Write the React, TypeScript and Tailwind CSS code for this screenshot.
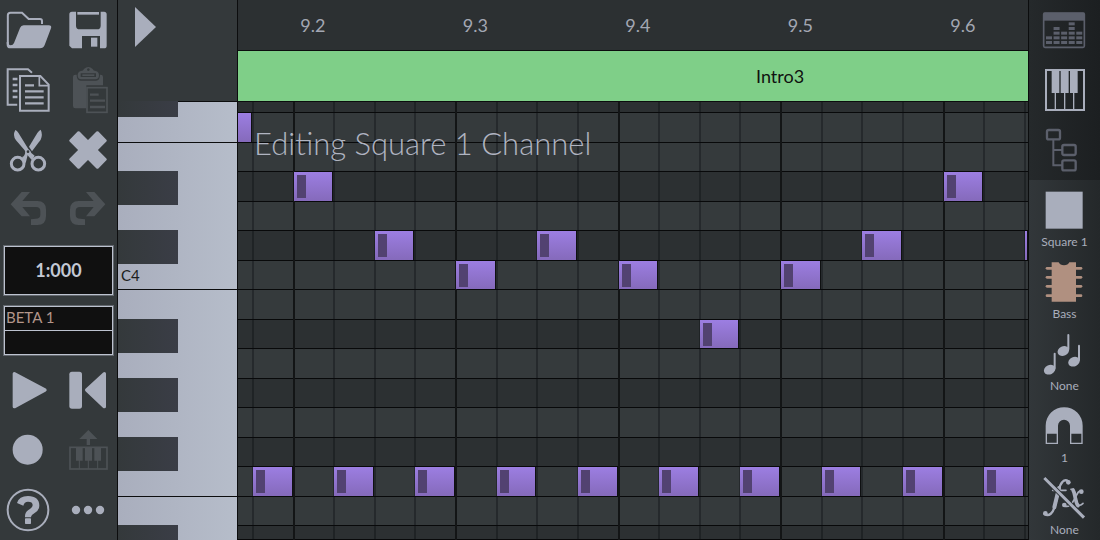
import type { ReactNode } from "react";

const LIGHT = "#a9aebc";
const DIM = "#4d5256";
const MUTED = "#5b5f6b";
const PANEL = "#34393b";

const COLS = "grid grid-cols-[minmax(0,140fr)_repeat(19,minmax(0,406fr))_minmax(0,42fr)]";
const ROWS =
  "grid grid-rows-[11px_30px_29px_30px_29px_30px_29px_30px_29px_30px_29px_30px_29px_30px_29px_1fr]";

/* ---------- toolbar icons (three units per pixel) ---------- */

function Icon({ color = LIGHT, children }: { color?: string; children: ReactNode }) {
  return (
    <svg viewBox="0 0 174 180" className="h-[60px] w-[58px]" fill={color} stroke="none" aria-hidden="true">
      {children}
    </svg>
  );
}

const FolderIcon = () => (
  <Icon>
    <path
      d="M23.500 132V46q0-8 8-8H66L86 57H120q6 0 6 6V72"
      fill="none"
      stroke={LIGHT}
      strokeWidth="6"
    />
    <path d="M71 76H146Q156 76 153 85L134 135Q130 145 120 145H31Q20 145 20 134V126H26V130Q26 136 32 136Q39 136 42 129L60 84Q63 76 71 76Z" />
  </Icon>
);

const SaveIcon = () => (
  <Icon>
    <path
      fillRule="evenodd"
      d="M42 35H138Q146 35 146 43V137Q146 145 138 145H126V108H72V145H42L34 137V43Q34 35 42 35ZM54 35V77Q54 88 65 88H117Q128 88 128 77V35Z"
    />
    <rect x="58" y="36" width="65" height="8" />
    <rect x="99" y="113" width="19" height="27" />
  </Icon>
);

const CopyIcon = () => (
  <Icon>
    <path d="M52 134H23V28H84L96 38" fill="none" stroke={LIGHT} strokeWidth="6" />
    <path d="M38 57H53M38 75H53M38 93H53M38 111H53" stroke={LIGHT} strokeWidth="8" />
    <path d="M60 48H121L146 74V152H60Z" fill={PANEL} stroke={PANEL} strokeWidth="14" />
    <path d="M60 48H121L146 74V152H60Z" fill="none" stroke={LIGHT} strokeWidth="6" />
    <path d="M118 48V77H146" fill="none" stroke={LIGHT} strokeWidth="5" />
    <path d="M75 76H102M75 94H131M75 112H131M75 130H131" stroke={LIGHT} strokeWidth="7" />
  </Icon>
);

const PasteIcon = () => (
  <Icon color={DIM}>
    <path d="M52 44H128Q135 44 135 51V76H85V145H52Q45 145 45 138V51Q45 44 52 44Z" />
    <path d="M66 28Q75 28 77 22Q91 14 105 22Q107 28 116 28Q126 32 126 45Q126 62 114 62H68Q56 62 56 45Q56 32 66 28Z" fill={PANEL} />
    <path
      fillRule="evenodd"
      d="M69 33Q76 33 78 27Q91 15 104 27Q106 33 113 33Q123 35 123 46Q123 58 112 58H70Q59 58 59 46Q59 35 69 33ZM91 25a4 4 0 1 0 .1 0ZM68 40V51H114V40Z"
    />
    <rect x="73" y="43" width="36" height="5" />
    <rect x="87" y="83" width="60" height="74" fill={PANEL} stroke={DIM} strokeWidth="5" />
    <path d="M96 104H122M96 122H141M96 141H141" stroke={DIM} strokeWidth="7" />
  </Icon>
);

const CutIcon = () => (
  <Icon>
    <path d="M46 30Q51 32 55 38L85 87Q93 93 94 99L104 107L96 121L84 107Q75 101 74 91L48 61Q37 46 46 30Z" />
    <path d="M122 29Q129 43 122 59L96 94L87 80L112 39Q117 31 122 29Z" />
    <path d="M76 95L84 101L77 130L66 111Q75 108 76 95Z" />
    <circle cx="84" cy="95" r="4" fill={PANEL} />
    <circle cx="53" cy="131" r="19" fill={PANEL} stroke={LIGHT} strokeWidth="9" />
    <circle cx="115" cy="131" r="19" fill={PANEL} stroke={LIGHT} strokeWidth="9" />
  </Icon>
);

const DeleteIcon = () => (
  <Icon>
    <g transform="rotate(45 90 90)">
      <rect x="29" y="69" width="122" height="42" rx="4" />
      <rect x="69" y="29" width="42" height="122" rx="4" />
    </g>
  </Icon>
);

const ARROW =
  "M32 73L65 36H90L67 63H112Q138 63 138 89V109Q138 135 112 135H93V118Q100 116 107 116Q121 116 121 104V93Q121 81 108 81H67L90 109H65Z";

const UndoIcon = () => (
  <Icon color={DIM}>
    <path d={ARROW} />
  </Icon>
);

const RedoIcon = () => (
  <Icon color={DIM}>
    <path d={ARROW} transform="translate(174 0) scale(-1 1)" />
  </Icon>
);

const PlayIcon = () => (
  <Icon>
    <path d="M43 41V140L135 90Z" stroke={LIGHT} strokeWidth="10" strokeLinejoin="round" />
  </Icon>
);

const RewindIcon = () => (
  <Icon>
    <rect x="34" y="35" width="38" height="111" rx="8" />
    <path d="M86 90L139 41V140Z" stroke={LIGHT} strokeWidth="10" strokeLinejoin="round" />
  </Icon>
);

const RecordIcon = () => (
  <Icon>
    <circle cx="83" cy="89" r="45" />
  </Icon>
);

const KeysUpIcon = () => (
  <Icon color={DIM}>
    <path d="M91 30L118 57H96V75H86V57H64Z" />
    <rect x="36" y="82" width="111" height="65" fill="none" stroke={DIM} strokeWidth="5" />
    <path d="M54 82H74V122H54ZM81 82H102V122H81ZM109 82H129V122H109Z" />
    <path d="M64 120V147M91 120V147M119 120V147" stroke={DIM} strokeWidth="3" />
  </Icon>
);

const HelpIcon = () => (
  <Icon>
    <circle cx="84" cy="90" r="61" fill="none" stroke={LIGHT} strokeWidth="6" />
    <path
      d="M51 69Q57 48 84 48Q118 49 118 77Q118 90 105 98Q93 105 93 112H75Q74 97 85 90Q98 83 98 75Q98 65 84 65Q73 65 70 77Z"
    />
    <rect x="75" y="115" width="18" height="17" rx="2" />
  </Icon>
);

const MoreIcon = () => (
  <Icon>
    <circle cx="54" cy="90" r="12.500" />
    <circle cx="90" cy="90" r="12.500" />
    <circle cx="126" cy="90" r="12.500" />
  </Icon>
);

/* ---------- sidebar icons ---------- */

function TabIcon({ children }: { children: ReactNode }) {
  return (
    <svg viewBox="3 0 213 180" className="h-[60px] w-[71px]" aria-hidden="true">
      {children}
    </svg>
  );
}

function ItemIcon({ children }: { children: ReactNode }) {
  return (
    <svg viewBox="3 0 213 162" className="h-[54px] w-[71px]" fill={LIGHT} aria-hidden="true">
      {children}
    </svg>
  );
}

const MixerIcon = () => (
  <TabIcon>
    <rect x="47" y="39" width="122" height="103" rx="4" fill="none" stroke={MUTED} strokeWidth="5" />
    <rect x="47" y="38" width="122" height="24" fill={MUTED} />
    {[2, 4, 3, 5, 3].map((count, col) =>
      Array.from({ length: count }, (_, i) => (
        <rect key={`${col}-${i}`} x={54 + col * 22.7} y={123 - i * 14} width="18" height="9" fill={MUTED} />
      )),
    )}
  </TabIcon>
);

const PianoIcon = () => (
  <TabIcon>
    <rect x="54" y="30" width="114" height="120" fill="none" stroke={LIGHT} strokeWidth="6" />
    <path d="M71 30H94V99H71ZM98 30H122V99H98ZM126 30H149V99H126Z" fill={LIGHT} />
    <path d="M82 98V150M110 98V150M137 98V150" stroke={LIGHT} strokeWidth="4" />
  </TabIcon>
);

const TreeIcon = () => (
  <TabIcon>
    <g fill="none" stroke={MUTED} strokeWidth="7">
      <rect x="57" y="30" width="39" height="28" rx="5" />
      <rect x="103" y="75" width="40" height="30" rx="5" />
      <rect x="103" y="121" width="40" height="30" rx="5" />
      <path d="M76 58V136H103M76 90H103" strokeWidth="6" />
    </g>
  </TabIcon>
);

const SquareIcon = () => (
  <ItemIcon>
    <rect x="53" y="35" width="111" height="111" />
  </ItemIcon>
);

const ChipIcon = () => (
  <ItemIcon>
    <g fill="#b09080">
      <path d="M71 31H92Q96 40 108 40Q120 40 124 31H144V149H71Z" />
      {[45, 72, 99, 127].map((y) => (
        <rect key={y} x="53" y={y} width="110" height="8" rx="4" />
      ))}
    </g>
  </ItemIcon>
);

const NotesIcon = () => (
  <ItemIcon>
    {[
      [106, 81],
      [138, 113],
      [65, 137],
    ].map(([x, y]) => (
      <g key={x}>
        <ellipse cx={x} cy={y} rx="18" ry="14" transform={`rotate(-25 ${x} ${y})`} />
        <rect x={x + 12} y={y - 51} width="6" height="49" rx="3" />
      </g>
    ))}
  </ItemIcon>
);

const MagnetIcon = () => (
  <ItemIcon>
    <path
      fillRule="evenodd"
      d="M53 144V89A55 55 0 0 1 164 89V144H126V89A18 18 0 0 0 90 89V144ZM57 113V140H86V113ZM130 113V140H160V113Z"
    />
  </ItemIcon>
);

const FxIcon = () => (
  <ItemIcon>
    <g fill="none" stroke={LIGHT} strokeLinecap="round">
      <path d="M121 40C108 30 97 45 93 66L80 116C75 134 64 147 50 139" strokeWidth="7" />
      <path d="M93 60L79 118" strokeWidth="12" />
      <path d="M74 67H114" strokeWidth="5" />
      <path d="M129 64C140 62 140 76 143 90C146 106 150 120 165 106" strokeWidth="5" />
      <path d="M135 66C140 74 140 84 143 94C145 104 147 110 150 113" strokeWidth="11" />
      <path d="M161 69C151 64 145 84 139 94C131 110 121 120 108 113" strokeWidth="5" />
    </g>
    <circle cx="121" cy="43" r="7" />
    <circle cx="52" cy="136" r="7" />
    <circle cx="160" cy="71" r="7" />
    <circle cx="109" cy="111" r="7" />
    <path d="M49 30L168 149" stroke="#2b3033" strokeWidth="14" />
    <path d="M49 30L168 149" stroke={LIGHT} strokeWidth="9" />
  </ItemIcon>
);

/* ---------- data ---------- */

const topTools: [string, () => ReactNode, boolean?][] = [
  ["Open", FolderIcon],
  ["Save", SaveIcon],
  ["Copy", CopyIcon],
  ["Paste", PasteIcon, true],
  ["Cut", CutIcon],
  ["Delete", DeleteIcon],
  ["Undo", UndoIcon, true],
  ["Redo", RedoIcon, true],
];

const bottomTools: [string, () => ReactNode, boolean?][] = [
  ["Play", PlayIcon],
  ["Rewind", RewindIcon],
  ["Record", RecordIcon],
  ["Step input", KeysUpIcon, true],
  ["Help", HelpIcon],
  ["More", MoreIcon],
];

const tabs: [string, () => ReactNode][] = [
  ["Mixer", MixerIcon],
  ["Piano roll", PianoIcon],
  ["Arrangement", TreeIcon],
];

const settings: [string, string, () => ReactNode][] = [
  ["Channel", "Square 1", SquareIcon],
  ["Instrument", "Bass", ChipIcon],
  ["Chord", "None", NotesIcon],
  ["Snap", "1", MagnetIcon],
  ["Effect", "None", FxIcon],
];

const pitches = ["F#4", "F4", "E4", "D#4", "D4", "C#4", "C4", "B3", "A#3", "A3", "G#3", "G3", "F#3", "F3", "E3", "D#3"];
const isSharp = (p: string) => p.includes("#");

const beats: [string, number][] = [
  ["9.2", 3],
  ["9.3", 7],
  ["9.4", 11],
  ["9.5", 15],
  ["9.6", 19],
];

const notes: [number, string][] = [
  [3, "D#4"],
  [5, "C#4"],
  [7, "C4"],
  [9, "C#4"],
  [11, "C4"],
  [13, "A#3"],
  [15, "C4"],
  [17, "C#4"],
  [19, "D#4"],
  [21, "C#4"],
  ...[2, 4, 6, 8, 10, 12, 14, 16, 18, 20].map((c): [number, string] => [c, "F3"]),
];

/* ---------- panels ---------- */

function Tools({ items }: { items: [string, () => ReactNode, boolean?][] }) {
  return (
    <div className="grid grid-cols-[58px_58px]">
      {items.map(([label, Glyph, disabled]) => (
        <button key={label} type="button" aria-label={label} disabled={disabled}>
          <Glyph />
        </button>
      ))}
    </div>
  );
}

function Toolbar() {
  return (
    <aside className="w-[118px] shrink-0 border-r border-[#0c0d0e] bg-[#34393b]">
      <Tools items={topTools} />
      <div className="flex h-[120px] flex-col gap-[11px] px-1 pt-[6px]">
        <button
          type="button"
          className="h-[49px] border border-[#bcc2cf] bg-[#101010] text-[18px] leading-[47px] font-bold text-[#c3c8d4] outline outline-[#a9aebc]/40"
        >
          1:000
        </button>
        <div className="border border-[#bcc2cf] bg-[#101010] outline outline-[#a9aebc]/40">
          <div className="h-[24px] border-b border-[#bcc2cf] pl-px text-[15px] leading-[21px] text-[#b3968a]">
            BETA 1
          </div>
          <div className="h-[23px]" />
        </div>
      </div>
      <Tools items={bottomTools} />
    </aside>
  );
}

function Keyboard() {
  return (
    <div className={`${ROWS} min-h-0 flex-1 bg-linear-to-r from-[#a9aebd] to-[#b6bdca]`}>
      {pitches.map((p, i) => (
        <div
          key={p}
          className={`flex min-h-0 text-[15px] leading-[28px] text-[#1c1e20] ${
            p.startsWith("F") && !isSharp(p) ? "border-b border-[#0c0d0e]" : ""
          } ${p === "C4" ? "border-b border-[#0c0d0e] pl-[3px]" : ""}`}
        >
          {isSharp(p) && (
            <div
              className={`z-10 -mt-px w-[60px] shrink-0 bg-linear-to-r from-[#34393b] to-[#3a3d46] ${
                i === 0 ? "h-[16px]" : "h-[34px]"
              }`}
            />
          )}
          {p === "C4" && p}
        </div>
      ))}
    </div>
  );
}

function PianoRoll() {
  return (
    <div className={`${COLS} ${ROWS} relative min-h-0 flex-1 overflow-hidden`}>
      {pitches.map((p, i) => (
        <div
          key={p}
          className={`col-span-full border-b border-[#08090a] ${isSharp(p) ? "bg-[#2c3032]" : "bg-[#353a3c]"}`}
          style={{ gridRow: i + 1 }}
        />
      ))}
      {Array.from({ length: 20 }, (_, i) => i + 2).map((c) => (
        <div
          key={c}
          className={`row-span-full ${
            (c - 3) % 4 === 0 ? "border-l-2 border-[#131516]" : "border-l-2 border-[#0a0c0d]/35"
          }`}
          style={{ gridColumn: c }}
        />
      ))}
      <div className="col-start-1 row-start-2 mb-px border-r border-[#0f1112] bg-linear-to-b from-[#9c7ee2] to-[#856abb]" />
      {notes.map(([c, p]) => (
        <div
          key={`${c}-${p}`}
          className="mb-px ml-px overflow-hidden border-r border-[#0f1112] bg-linear-to-b from-[#9c7ee2] to-[#856abb]"
          style={{ gridColumn: c, gridRow: pitches.indexOf(p) + 1 }}
        >
          {c < 21 && <div className="mt-[3px] ml-[3px] h-[23px] w-[9px] bg-[#524271]" />}
        </div>
      ))}
      <p className="absolute top-[21px] left-4 text-[31px] leading-10 font-light whitespace-nowrap text-[#b0b4c1]">
        Editing Square 1 Channel
      </p>
    </div>
  );
}

function Sidebar() {
  return (
    <aside className="w-[72px] shrink-0 border-l border-[#0c0d0e] bg-linear-to-r from-[#32373a] to-[#24282a]">
      <div className="bg-linear-to-r from-[#25292b] to-[#1c1f21]">
        {tabs.map(([label, Glyph]) => (
          <button key={label} type="button" aria-label={label} className="block h-[60px] w-full">
            <Glyph />
          </button>
        ))}
      </div>
      {settings.map(([label, value, Glyph]) => (
        <button
          key={label}
          type="button"
          aria-label={`${label}: ${value}`}
          className="flex h-[72px] w-full flex-col items-center text-[12px] leading-4 text-[#a9aebc]"
        >
          <Glyph />
          {value}
        </button>
      ))}
    </aside>
  );
}

export default function App() {
  return (
    <div className="flex h-screen overflow-hidden bg-[#34393b] font-['Lato',sans-serif]">
      <Toolbar />
      <section className="flex w-[120px] shrink-0 flex-col border-r border-[#0c0d0e]">
        <div className="h-[102px] shrink-0 border-b border-[#0c0d0e] pt-[7px] pl-[17px]">
          <svg viewBox="0 0 21 40" className="h-10 w-[21px]" fill={LIGHT} aria-hidden="true">
            <path d="M0 0L21 20L0 40Z" />
          </svg>
        </div>
        <Keyboard />
      </section>
      <main className="flex min-w-0 flex-1 flex-col">
        <div className={`${COLS} h-[51px] shrink-0 border-b border-[#0c0d0e] bg-[#2c3032] text-[18px] leading-[50px] text-[#a3a7b3]`}>
          {beats.map(([label, col]) => (
            <span key={label} className="flex justify-center" style={{ gridColumn: col, gridRow: 1 }}>
              {label}
            </span>
          ))}
        </div>
        <div className={`${COLS} h-[51px] shrink-0 border-b border-[#0c0d0e] bg-[#7fcf88] text-[18px] leading-[50px] text-[#101210]`}>
          <span className="col-span-8 col-start-11 text-center">Intro3</span>
        </div>
        <PianoRoll />
      </main>
      <Sidebar />
    </div>
  );
}
